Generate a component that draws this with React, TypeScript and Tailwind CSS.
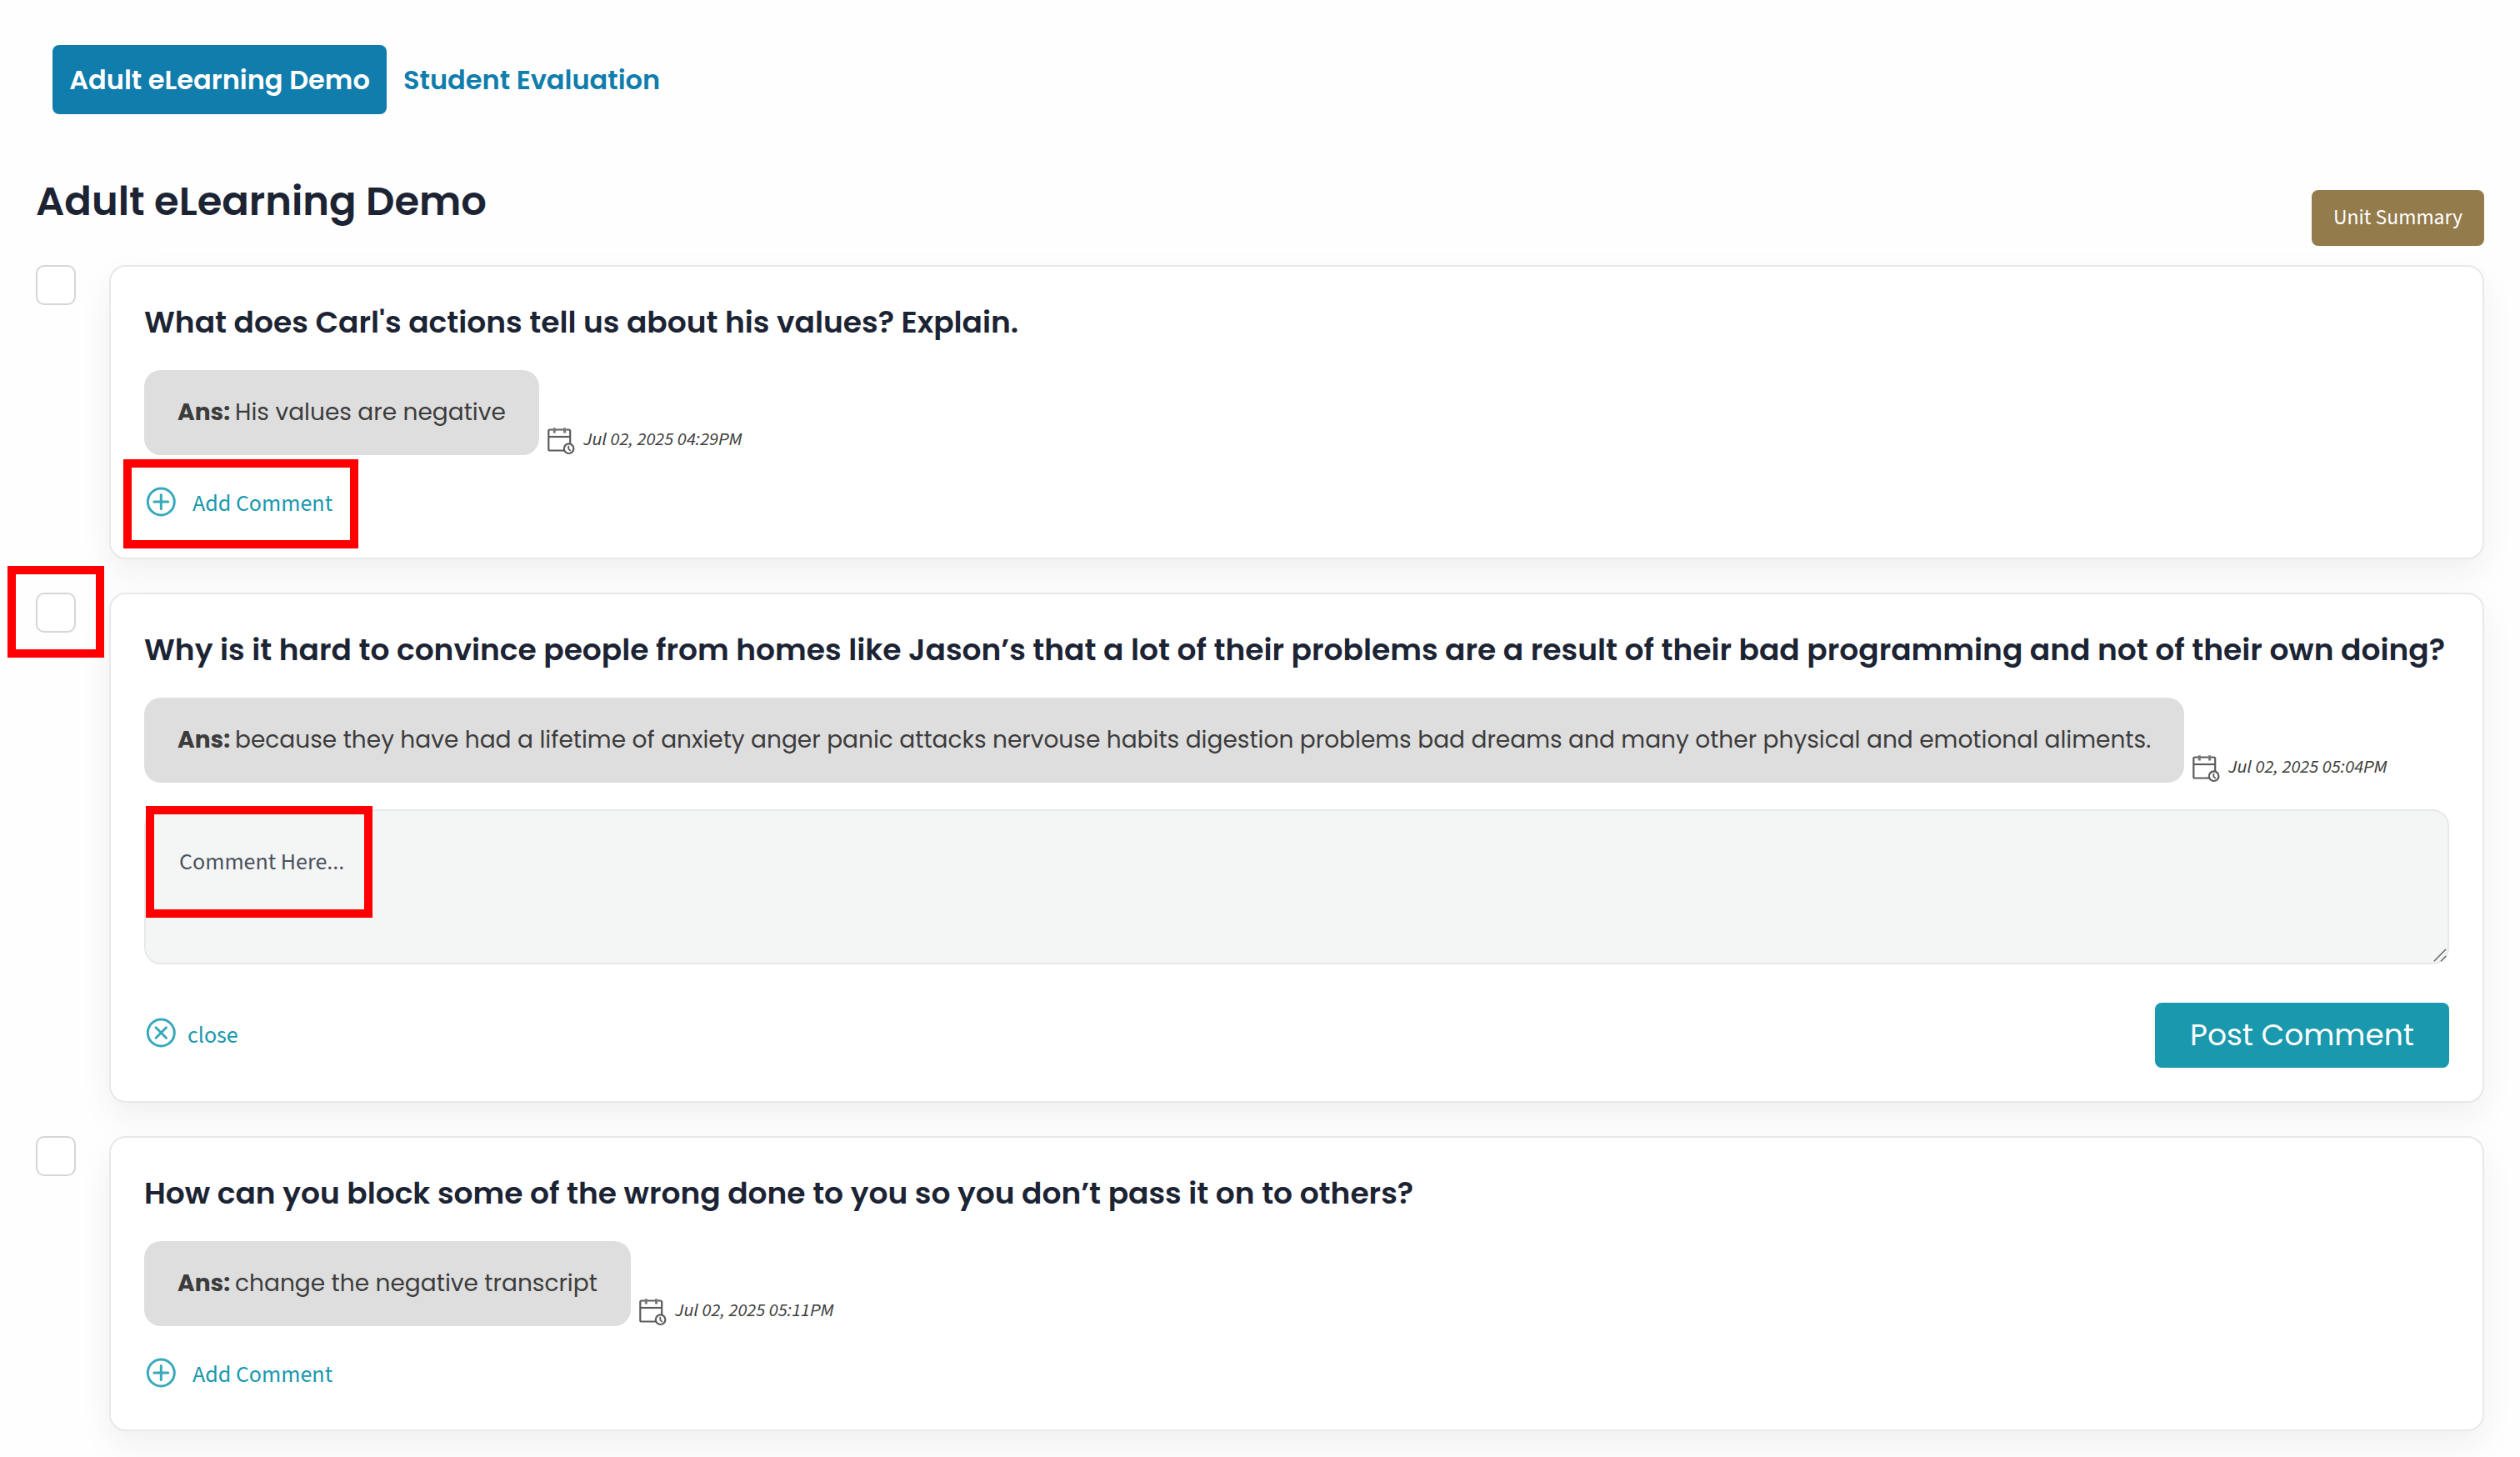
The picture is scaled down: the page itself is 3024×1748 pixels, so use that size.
import type { ReactNode } from "react";

const brand = "font-['Poppins','Inter',sans-serif]";
const body = "font-['Source_Sans_3','Noto_Sans_CJK_JP',sans-serif]";

function CalendarIcon() {
  return (
    <svg className="h-[34px] w-[34px] shrink-0" viewBox="0 0 34 34" fill="none" stroke="#5c5c5c" strokeWidth="2.2">
      <path d="M21.5 28.5H2.8a1.5 1.5 0 0 1-1.5-1.5V5a1.5 1.5 0 0 1 1.5-1.5h22.9a1.5 1.5 0 0 1 1.5 1.5v16.5" />
      <path d="M1.3 12h25.9" />
      <path d="M8.3 1.2v6.3M20.6 1.2v6.3" stroke="#777777" strokeWidth="3" />
      <circle cx="25.6" cy="26.2" r="5.8" fill="#ffffff" />
      <path d="M25.3 22.8v3.8l2.4 2.2" strokeWidth="1.8" />
    </svg>
  );
}

function CircleIcon({ children }: { children: ReactNode }) {
  return (
    <svg className="h-10 w-10 shrink-0" viewBox="0 0 40 40" fill="none" stroke="#37a9ba" strokeWidth="3" strokeLinecap="round">
      <circle cx="20.3" cy="20" r="16" />
      {children}
    </svg>
  );
}

function Highlight({ className }: { className: string }) {
  return <div className={`pointer-events-none absolute border-[10px] border-[#ff0000] ${className}`} />;
}

function AddComment({ highlighted }: { highlighted?: boolean }) {
  return (
    <div className="relative mt-[34px] flex w-fit items-center gap-[18px] text-[#1998ae]">
      {highlighted && <Highlight className="-top-[29px] -left-[25px] h-[107px] w-[282px]" />}
      <CircleIcon>
        <path d="M20.3 11.6v16.8M11.9 20h16.8" />
      </CircleIcon>
      <span className="mt-1 text-[28px] leading-10">Add Comment</span>
    </div>
  );
}

function CommentForm() {
  return (
    <>
      <div className="relative mt-8 h-[186px]">
        <textarea
          placeholder="Comment Here..."
          className="block h-full w-full resize-none rounded-[20px] border-2 border-[#e8e8e8] bg-[#f4f6f6] px-10 pt-[41px] text-[28px] leading-10 placeholder:text-[#4a525c]"
        />
        <Highlight className="-top-1 left-0.5 h-[134px] w-[272px]" />
        <svg className="absolute right-[3px] bottom-[3px] h-4 w-4" viewBox="0 0 16 16" fill="none" stroke="#5f5f5f" strokeWidth="1.4">
          <path d="M0.8 15.2 15.2 0.8M9 15.2l6.2-6.2" />
        </svg>
      </div>
      <div className="mt-[46px] flex items-center justify-between">
        <div className="mb-1.5 flex items-center gap-3 text-[#1998ae]">
          <CircleIcon>
            <path d="m14.1 13.8 12.4 12.4M26.5 13.8 14.1 26.2" />
          </CircleIcon>
          <span className="mt-1.5 text-[28px] leading-10">close</span>
        </div>
        <button className={`h-[78px] w-[353px] rounded-lg bg-[#1998ae] text-[36px] text-white ${brand}`}>Post Comment</button>
      </div>
    </>
  );
}

type QuestionProps = {
  title: string;
  answer: string;
  date: string;
  cardSize: string;
  answerWidth: string;
  highlightCheckbox?: boolean;
  children: ReactNode;
};

function Question(p: QuestionProps) {
  return (
    <div className="flex gap-10">
      <div className="relative h-12 w-12 shrink-0">
        <div className="h-12 w-12 rounded-[10px] border-2 border-[#d6d6d6] bg-white" />
        {p.highlightCheckbox && <Highlight className="-top-8 -left-[34px] h-[110px] w-[116px]" />}
      </div>
      <section
        className={`min-w-0 flex-1 rounded-[20px] border-2 border-[#e8e8e8] bg-white px-10 pt-10 shadow-[0_16px_40px_rgba(0,0,0,0.06)] ${p.cardSize}`}
      >
        <h2 className={`text-[36px] leading-[54px] font-semibold whitespace-nowrap text-[#1c2434] ${brand}`}>{p.title}</h2>
        <div className="mt-[30px] flex items-end">
          <div
            className={`h-[102px] rounded-[20px] bg-[#dedede] pl-10 text-[28px] leading-[102px] whitespace-nowrap text-[#3c3c3c] ${brand} ${p.answerWidth}`}
          >
            <b className="mr-[-1.5px] font-bold">Ans:</b> {p.answer}
          </div>
          <div className="ml-[10px] flex items-end gap-[9px]">
            <CalendarIcon />
            <span className="mb-[5px] text-[22.8px] leading-7 text-[#3c3c3c] italic">{p.date}</span>
          </div>
        </div>
        {p.children}
      </section>
    </div>
  );
}

export default function App() {
  return (
    <div className={`h-[1748px] w-[3024px] overflow-hidden bg-[#fefefe] px-[43px] pt-[54px] ${body}`}>
      <nav className={`ml-5 flex h-[83px] items-center text-[32px] font-semibold ${brand}`}>
        <button className="h-[83px] w-[401px] rounded-lg bg-[#107dac] text-white">Adult eLearning Demo</button>
        <button className="ml-5 text-[#107dac]">Student Evaluation</button>
      </nav>

      <header className="mt-[68px] flex h-[113px] items-start justify-between">
        <h1 className={`mt-px text-[48px] leading-[72px] font-semibold text-[#1c2434] ${brand}`}>Adult eLearning Demo</h1>
        <button className="mt-[23px] h-[67px] w-[207px] rounded-lg bg-[#947b4b] pb-px text-[25.6px] text-white">Unit Summary</button>
      </header>

      <main className="flex flex-col gap-10">
        <Question
          title="What does Carl's actions tell us about his values? Explain."
          answer="His values are negative"
          date="Jul 02, 2025 04:29PM"
          cardSize="h-[353px]"
          answerWidth="w-[474px]"
        >
          <AddComment highlighted />
        </Question>
        <Question
          title="Why is it hard to convince people from homes like Jason’s that a lot of their problems are a result of their bad programming and not of their own doing?"
          answer="because they have had a lifetime of anxiety anger panic attacks nervouse habits digestion problems bad dreams and many other physical and emotional aliments."
          date="Jul 02, 2025 05:04PM"
          cardSize="h-[612px]"
          answerWidth="w-[2448px]"
          highlightCheckbox
        >
          <CommentForm />
        </Question>
        <Question
          title="How can you block some of the wrong done to you so you don’t pass it on to others?"
          answer="change the negative transcript"
          date="Jul 02, 2025 05:11PM"
          cardSize="h-[354px]"
          answerWidth="w-[584px]"
        >
          <AddComment />
        </Question>
      </main>
    </div>
  );
}
